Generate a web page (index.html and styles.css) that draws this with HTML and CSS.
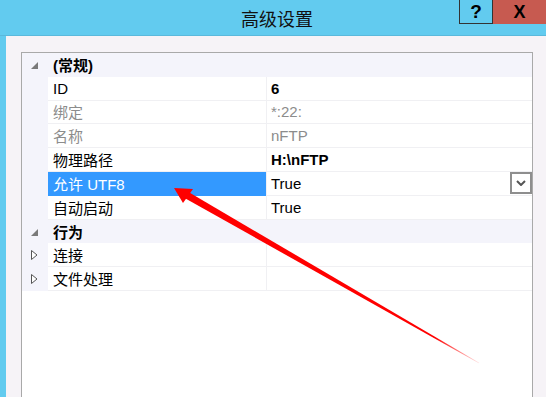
FILE: index.html
```html
<!DOCTYPE html>
<html lang="zh-CN">
<head>
    <meta charset="UTF-8">
    <meta name="viewport" content="width=device-width, initial-scale=1.0">
    <title>高级设置</title>
    <link rel="stylesheet" href="styles.css">
</head>
<body>
    <div class="window">
        <div class="titlebar">
            <span class="title">高级设置</span>
            <div class="buttons">
                <div class="btn help">?</div>
                <div class="btn close">X</div>
            </div>
        </div>

        <div class="client">
            <div class="props">
                <div class="row cat">
                    <div class="gutter"><svg class="open" width="7" height="7" viewBox="0 0 7 7"><path d="M7 0 L7 7 L0 7 Z"/></svg></div>
                    <div class="name">(常规)</div>
                    <div class="value"></div>
                </div>
                <div class="row">
                    <div class="gutter"></div>
                    <div class="name">ID</div>
                    <div class="value bold">6</div>
                </div>
                <div class="row off">
                    <div class="gutter"></div>
                    <div class="name">绑定</div>
                    <div class="value">*:22:</div>
                </div>
                <div class="row off">
                    <div class="gutter"></div>
                    <div class="name">名称</div>
                    <div class="value">nFTP</div>
                </div>
                <div class="row">
                    <div class="gutter"></div>
                    <div class="name">物理路径</div>
                    <div class="value bold">H:\nFTP</div>
                </div>
                <div class="row selected">
                    <div class="gutter"></div>
                    <div class="name">允许 UTF8</div>
                    <div class="value">True
                        <span class="drop"><svg width="10" height="6" viewBox="0 0 10 6"><path d="M1 1 L5 5 L9 1" fill="none" stroke="#555" stroke-width="2"/></svg></span>
                    </div>
                </div>
                <div class="row">
                    <div class="gutter"></div>
                    <div class="name">自动启动</div>
                    <div class="value">True</div>
                </div>
                <div class="row cat">
                    <div class="gutter"><svg class="open" width="7" height="7" viewBox="0 0 7 7"><path d="M7 0 L7 7 L0 7 Z"/></svg></div>
                    <div class="name">行为</div>
                    <div class="value"></div>
                </div>
                <div class="row">
                    <div class="gutter"><svg class="shut" width="7" height="10" viewBox="0 0 7 10"><path d="M0.5 0.5 L6 5 L0.5 9.5 Z"/></svg></div>
                    <div class="name">连接</div>
                    <div class="value"></div>
                </div>
                <div class="row">
                    <div class="gutter"><svg class="shut" width="7" height="10" viewBox="0 0 7 10"><path d="M0.5 0.5 L6 5 L0.5 9.5 Z"/></svg></div>
                    <div class="name">文件处理</div>
                    <div class="value"></div>
                </div>
            </div>
        </div>
    </div>

    <!-- annotation arrow drawn over the screenshot -->
    <svg class="arrow" width="546" height="397" viewBox="0 0 546 397">
        <defs>
            <linearGradient id="fade" x1="186" y1="194" x2="479" y2="363" gradientUnits="userSpaceOnUse">
                <stop offset="0" stop-color="#ff0000"/>
                <stop offset="0.85" stop-color="#ff0000"/>
                <stop offset="1" stop-color="#ff0000" stop-opacity="0.1"/>
            </linearGradient>
        </defs>
        <polygon points="186.8,191 183.2,197.2 478.8,363.3 479.2,362.7" fill="url(#fade)"/>
        <polygon points="174,188 193,189 183,203" fill="#ff0000"/>
    </svg>
</body>
</html>
```

FILE: styles.css
```css
body { margin: 0; height: 397px; overflow: hidden; background: #62cbef; font-family: "Liberation Sans", "Noto Sans CJK SC", sans-serif; }
.window { display: flex; flex-direction: column; height: 100%; }

.titlebar { height: 35px; border-bottom: 1px solid #5ab9dc; display: flex; justify-content: center; position: relative; }
.title { font-family: "Noto Sans CJK SC", sans-serif; font-size: 18px; line-height: 36px; color: #111; margin-left: 8px; }
.buttons { position: absolute; top: 0; right: 0; display: flex; }
.btn { height: 24px; display: flex; align-items: center; justify-content: center; font-weight: bold; font-size: 17px; color: #000; box-sizing: border-box; }
.help { width: 34px; border: 1px solid #333; border-top: 0; font-size: 19px; }
.close { width: 53px; background: #c75a50; font-size: 18px; }

.client { flex: 1; margin-left: 6px; background: #f6f3f7; padding: 16px 13px 0 15px; display: flex; }
.props { flex: 1; border: 1px solid #a9a9a9; border-bottom: 0; background: #fff; font-size: 15px; color: #000; }

.row { display: grid; grid-template-columns: 26px 218px 1fr; height: 23.8px; }
.row > div { display: flex; align-items: center; box-sizing: border-box; }
.gutter { background: #f4f4fb; justify-content: center; padding-right: 2px; }
.name { padding-left: 5px; border-bottom: 1px solid #f0f0f3; }
.value { padding-left: 4px; border-left: 1px solid #f0f0f3; border-bottom: 1px solid #f0f0f3; position: relative; }
.bold { font-weight: bold; }

.cat { background: #f4f4fb; }
.cat .name { font-weight: bold; border-bottom: 0; }
.cat .value { border: 0; }
.open { fill: #7a7a7a; margin-top: 2px; }
.shut { fill: #fff; stroke: #555; stroke-width: 1; }

.off .name, .off .value { color: #8c8c8c; }
.selected .name { background: #3399ff; color: #fff; border-bottom-color: #3399ff; }

.drop { position: absolute; right: 0; top: 0; width: 22px; height: 22px; box-sizing: border-box; border: 2px solid #8e8e8e; background: #fff; display: flex; align-items: center; justify-content: center; }

.arrow { position: absolute; left: 0; top: 0; pointer-events: none; }
```
